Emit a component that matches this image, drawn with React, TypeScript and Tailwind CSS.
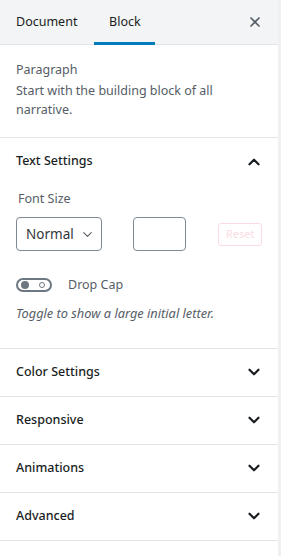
import { ChevronDown, ChevronUp, X } from "lucide-react";

const panels = ["Color Settings", "Responsive", "Animations", "Advanced"];

export default function App() {
  return (
    <div
      className="flex h-[556px] w-[281px] bg-white text-[12.5px] text-[#191e23]"
      style={{ fontFamily: '"Noto Sans", "Segoe UI", sans-serif' }}
    >
      <div className="flex-1 min-w-0">
        {/* tabs */}
        <div className="flex h-[45px] items-stretch border-b border-[#e2e4e7] bg-[#f3f4f5]">
          <button className="px-4">Document</button>
          <button className="relative w-[61px] ml-[1px]">
            Block
            <span className="absolute bottom-[-1px] left-0 right-0 h-[3px] bg-[#007cba]" />
          </button>
          <div className="flex-1" />
          <button className="w-[46px] flex items-center justify-center text-[#555d66]">
            <X size={16} strokeWidth={2.5} />
          </button>
        </div>

        {/* block card */}
        <div className="border-b border-[#e2e4e7] px-4 pt-[15px] pb-[18px]">
          <div className="text-[#555d66] leading-[19px]">Paragraph</div>
          <p className="text-[#555d66] leading-[19px] mt-[2px]">
            Start with the building block of all narrative.
          </p>
        </div>

        {/* text settings */}
        <div className="border-b border-[#e2e4e7] px-4 pb-[25px]">
          <div className="flex h-[47px] items-center justify-between">
            <span className="font-medium text-[#191e23]">Text Settings</span>
            <ChevronUp size={18} strokeWidth={3} className="mr-[-1px]" />
          </div>
          <div className="pl-[2px] pt-[5px] text-[#555d66] leading-[18px]">Font Size</div>
          <div className="mt-[9px] flex items-center">
            <div className="flex h-[34px] w-[86px] items-center justify-between rounded-[4px] border border-[#7e8993] pl-[9px] pr-[6px] text-[13.5px] text-[#32373c]">
              Normal
              <ChevronDown size={15} strokeWidth={1.75} className="text-[#555d66]" />
            </div>
            <div className="ml-[31px] h-[34px] w-[54px] rounded-[4px] border border-[#7e8993]" />
            <button className="ml-[32px] h-[23px] w-[44px] rounded-[3px] border border-[#f9dde2] text-[11px] text-[#f9dde2]">
              Reset
            </button>
          </div>
          <div className="mt-[25px] flex items-center">
            <div className="relative h-[14px] w-[36px] rounded-full border-2 border-[#6c7781]">
              <span className="absolute left-[3px] top-[1px] h-[8px] w-[8px] rounded-full bg-[#6c7781]" />
              <span className="absolute right-[5px] top-[2px] h-[6px] w-[6px] rounded-full border border-[#6c7781]" />
            </div>
            <span className="ml-[16px] text-[#555d66]">Drop Cap</span>
          </div>
          <p className="mt-[9px] italic text-[12.8px] text-[#555d66]">
            Toggle to show a large initial letter.
          </p>
        </div>

        {panels.map((p) => (
          <div
            key={p}
            className="flex h-[48px] items-center justify-between border-b border-[#e2e4e7] px-4"
          >
            <span className="font-medium text-[#191e23]">{p}</span>
            <ChevronDown size={18} strokeWidth={3} className="mr-[-1px]" />
          </div>
        ))}
      </div>
      <div className="w-[3px] bg-[#f0f0f0]" />
    </div>
  );
}
